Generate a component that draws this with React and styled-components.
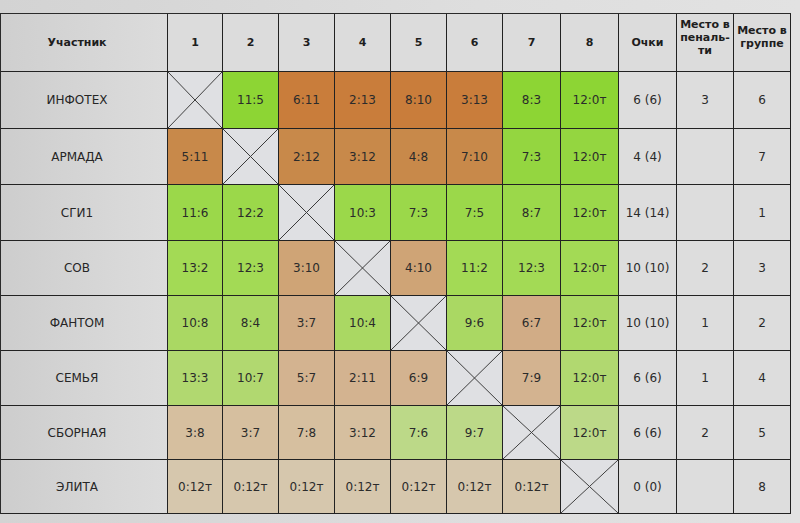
import React from "react";
import styled, { createGlobalStyle } from "styled-components";

const Global = createGlobalStyle`
  html, body { margin: 0; padding: 0; }
  body {
    background: #dadada;
    font-family: "DejaVu Sans", "Liberation Sans", sans-serif;
    width: 800px;
    height: 523px;
    overflow: hidden;
  }
`;

const Page = styled.div`
  width: 800px;
  height: 523px;
  box-sizing: border-box;
  padding-top: 13px;
  background: linear-gradient(to right, #d3d3d3 0%, #dedede 60%, #e2e2e2 100%);
`;

const Table = styled.div`
  display: grid;
  width: 791px;
  grid-template-columns: 167px 55px 56px 56px 56px 56px 56px 58px 58px 58px 57px 57px;
  grid-template-rows: 58px 57px 56px 56px 55px 55px 55px 54px 54px;
  border-top: 1px solid #2a2a2a;
  border-left: 1px solid #2a2a2a;
  box-sizing: border-box;
`;

const Cell = styled.div`
  box-sizing: border-box;
  border-right: 1px solid #222;
  border-bottom: 1px solid #222;
  display: flex;
  align-items: center;
  justify-content: center;
  text-align: center;
  font-size: 12px;
  color: #2b2b2b;
  background: ${(p) => p.$bg || "#dedede"};
`;

const HeadCell = styled(Cell)`
  font-size: 11px;
  font-weight: bold;
  line-height: 13px;
  color: #1e1e1e;
  background: #dcdcdc;
  align-items: ${(p) => (p.$top ? "flex-start" : "center")};
  padding-top: ${(p) => (p.$top ? "4px" : "0")};
`;

const NameCell = styled(Cell)`
  background: linear-gradient(to right, #cdcdcd 0%, #d8d8d8 70%, #dcdcdc 100%);
  color: #262626;
  padding-right: 14px;
`;

const NameHead = styled(HeadCell)`
  background: linear-gradient(to right, #cfcfcf 0%, #d8d8d8 70%, #dcdcdc 100%);
  padding-right: 14px;
`;

const CrossCell = styled(Cell)`
  background:
    linear-gradient(to top right, transparent calc(50% - 0.7px), #3a3a3a 50%, transparent calc(50% + 0.7px)),
    linear-gradient(to bottom right, transparent calc(50% - 0.7px), #3a3a3a 50%, transparent calc(50% + 0.7px)),
    #dfe0e3;
`;

const StatCell = styled(Cell)`
  background: #dddddd;
  color: #2a2a2a;
`;

const GroupLabel = styled.span`
  margin-top: 6px;
`;

const palettes = [
  { win: "#8dd534", loss: "#c97d3b" },
  { win: "#94d640", loss: "#c8894a" },
  { win: "#9bd84a", loss: "#cc9258" },
  { win: "#a3da55", loss: "#cfa476" },
  { win: "#aad863", loss: "#d1ac86" },
  { win: "#b1d870", loss: "#d3b390" },
  { win: "#bcd988", loss: "#d6bf9f" },
  { win: "#c2d99a", loss: "#d6c7ad" },
];

const rows = [
  ["ИНФОТЕХ", [null, "11:5", "6:11", "2:13", "8:10", "3:13", "8:3", "12:0т"], "6 (6)", "3", "6"],
  ["АРМАДА", ["5:11", null, "2:12", "3:12", "4:8", "7:10", "7:3", "12:0т"], "4 (4)", "", "7"],
  ["СГИ1", ["11:6", "12:2", null, "10:3", "7:3", "7:5", "8:7", "12:0т"], "14 (14)", "", "1"],
  ["СОВ", ["13:2", "12:3", "3:10", null, "4:10", "11:2", "12:3", "12:0т"], "10 (10)", "2", "3"],
  ["ФАНТОМ", ["10:8", "8:4", "3:7", "10:4", null, "9:6", "6:7", "12:0т"], "10 (10)", "1", "2"],
  ["СЕМЬЯ", ["13:3", "10:7", "5:7", "2:11", "6:9", null, "7:9", "12:0т"], "6 (6)", "1", "4"],
  ["СБОРНАЯ", ["3:8", "3:7", "7:8", "3:12", "7:6", "9:7", null, "12:0т"], "6 (6)", "2", "5"],
  ["ЭЛИТА", ["0:12т", "0:12т", "0:12т", "0:12т", "0:12т", "0:12т", "0:12т", null], "0 (0)", "", "8"],
];

const isWin = (s) => {
  const [a, b] = s.replace("т", "").split(":").map(Number);
  return a > b;
};

export default function App() {
  return (
    <>
      <Global />
      <Page>
        <Table>
          <NameHead>Участник</NameHead>
          {[1, 2, 3, 4, 5, 6, 7, 8].map((n) => (
            <HeadCell key={n}>{n}</HeadCell>
          ))}
          <HeadCell>Очки</HeadCell>
          <HeadCell $top>
            Место в<br />пеналь-<br />ти
          </HeadCell>
          <HeadCell $top>
            <GroupLabel>
              Место в<br />группе
            </GroupLabel>
          </HeadCell>
          {rows.map(([name, games, pts, pen, place], ri) => (
            <React.Fragment key={name}>
              <NameCell>{name}</NameCell>
              {games.map((g, gi) =>
                g === null ? (
                  <CrossCell key={gi} />
                ) : (
                  <Cell key={gi} $bg={isWin(g) ? palettes[ri].win : palettes[ri].loss}>
                    {g}
                  </Cell>
                )
              )}
              <StatCell>{pts}</StatCell>
              <StatCell>{pen}</StatCell>
              <StatCell>{place}</StatCell>
            </React.Fragment>
          ))}
        </Table>
      </Page>
    </>
  );
}
